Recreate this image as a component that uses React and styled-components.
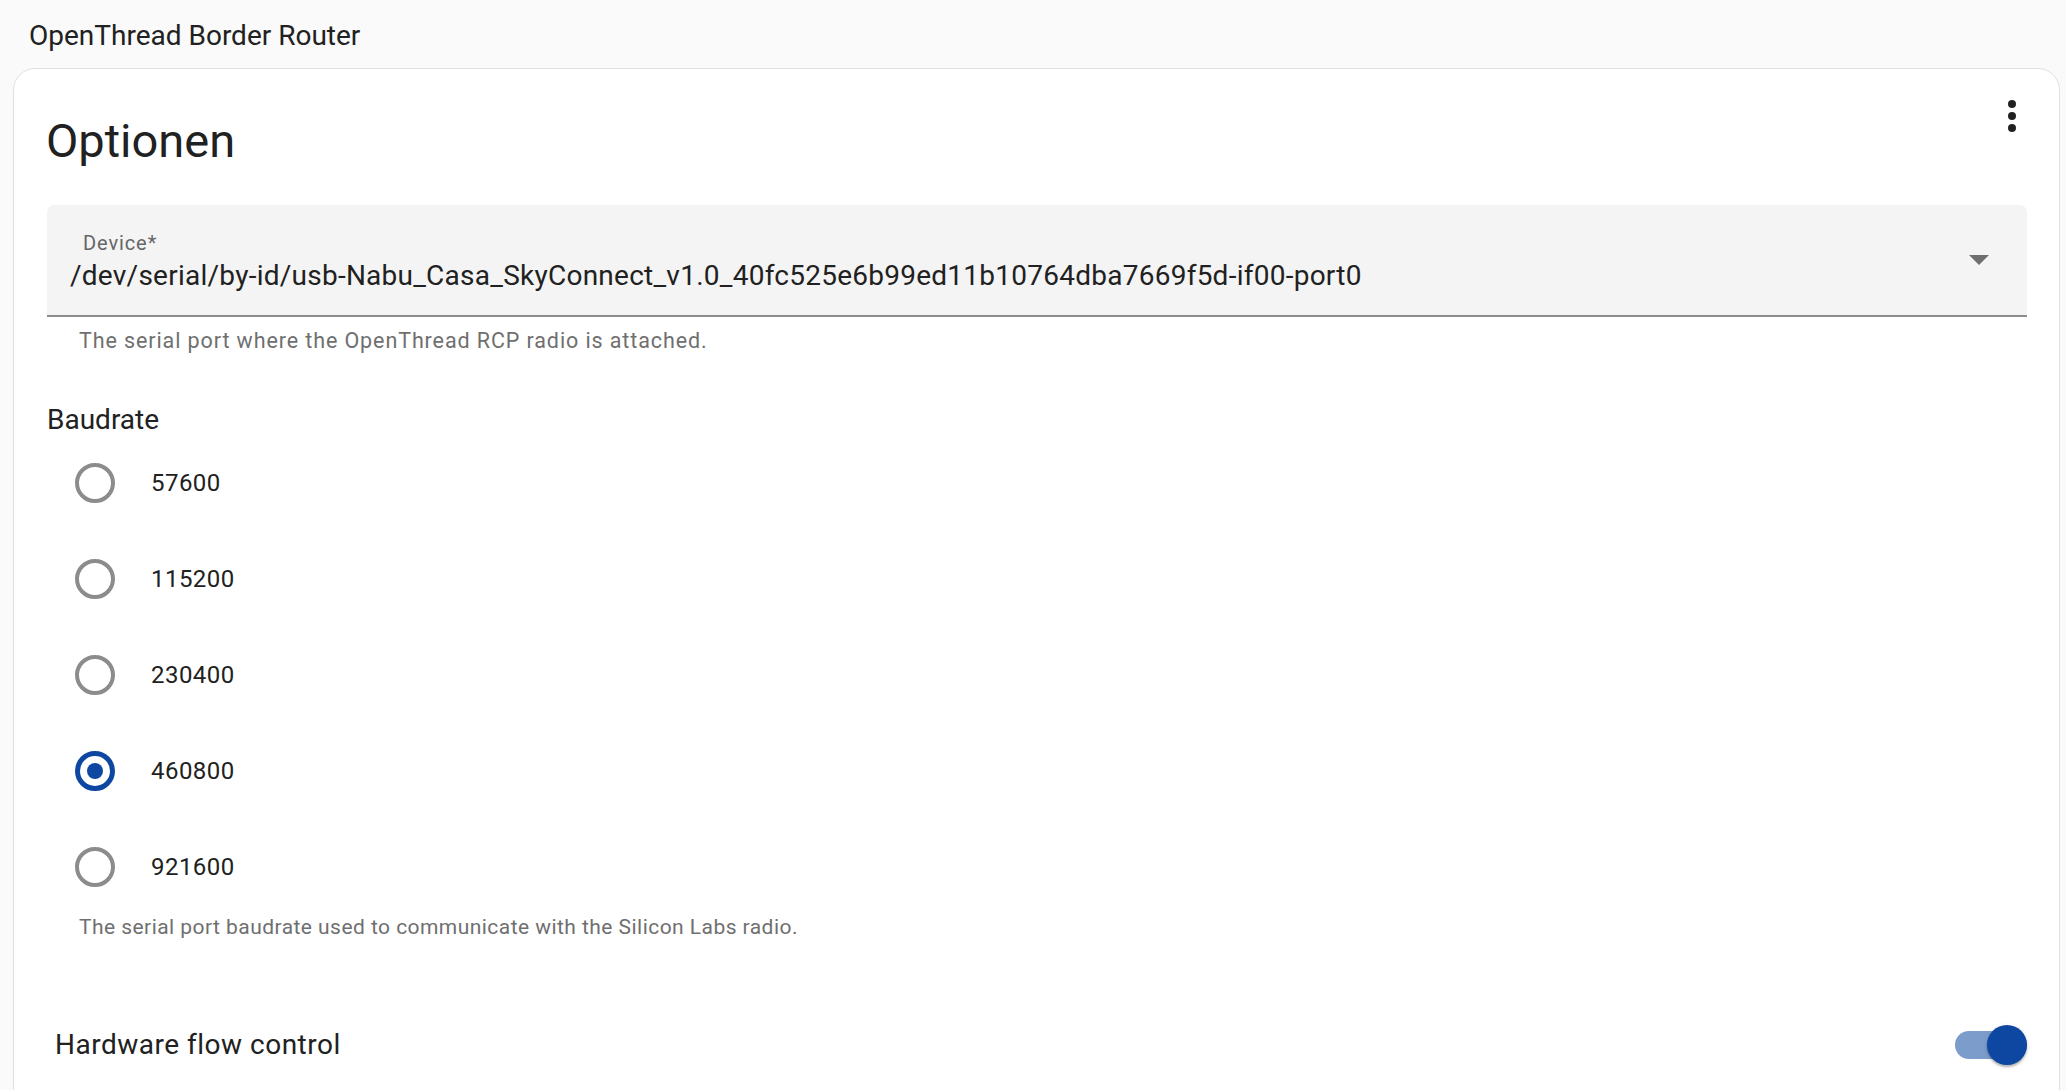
import React from "react";
import styled, { createGlobalStyle } from "styled-components";

const GlobalStyle = createGlobalStyle`
  html, body {
    margin: 0;
    padding: 0;
    background: #fafafa;
    font-family: Roboto, "Noto Sans", "Liberation Sans", sans-serif;
    color: #212121;
    overflow: hidden;
  }
  * { box-sizing: border-box; }
`;

const Page = styled.div`
  display: flex;
  flex-direction: column;
  min-height: 100vh;
`;

const TopBar = styled.div`
  height: 68px;
  padding: 16px 0 0 29px;
  font-size: 28px;
  line-height: 40px;
  color: #212121;
`;

const Card = styled.section`
  position: relative;
  margin: 0 6px 0 13px;
  padding: 0 32px 120px 33px;
  background: #fff;
  border: 1px solid #e0e0e0;
  border-radius: 22px 22px 0 0;
`;

const CardHeader = styled.div`
  display: flex;
  justify-content: space-between;
  align-items: flex-start;
  padding-top: 23px;
`;

const Title = styled.h1`
  margin: 21px 0 0 -1px;
  font-size: 47px;
  font-weight: 400;
  line-height: 56px;
`;

const MenuButton = styled.button`
  width: 48px;
  height: 48px;
  margin-right: -9px;
  padding: 0;
  border: 0;
  background: none;
  color: #212121;
  display: flex;
  align-items: center;
  justify-content: center;
`;

const SelectField = styled.div`
  display: flex;
  align-items: center;
  height: 112px;
  margin-top: 36px;
  background: #f4f4f4;
  border-radius: 7px 7px 0 0;
  border-bottom: 2px solid #8d8d8d;
`;

const FieldText = styled.div`
  flex: 1;
  display: flex;
  flex-direction: column;
  align-self: stretch;
  padding: 28px 0 0 23px;
`;

const FloatingLabel = styled.span`
  margin-left: 13px;
  margin-bottom: 7px;
  font-size: 20px;
  line-height: 20px;
  letter-spacing: 0.9px;
  color: #666;
`;

const SelectedValue = styled.span`
  font-size: 28px;
  line-height: 32px;
  letter-spacing: 0.25px;
  color: #212121;
  white-space: nowrap;
`;

const DropArrow = styled.svg`
  width: 20px;
  height: 10px;
  margin-right: 38px;
  fill: #6f6f6f;
`;

const HelperText = styled.div`
  margin-top: ${(p) => p.$gap || 0}px;
  padding-left: ${(p) => p.$indent}px;
  font-size: ${(p) => p.$size}px;
  line-height: 24px;
  letter-spacing: ${(p) => p.$spacing}px;
  color: #6f6f6f;
`;

const SectionLabel = styled.div`
  margin-top: 51px;
  font-size: 28px;
  line-height: 32px;
  color: #212121;
`;

const RadioList = styled.div`
  display: flex;
  flex-direction: column;
  margin-top: -1px;
`;

const RadioRow = styled.label`
  display: flex;
  align-items: center;
  gap: 36px;
  height: 96px;
  padding-left: 28px;
`;

const RadioCircle = styled.span`
  width: 40px;
  height: 40px;
  border-radius: 50%;
  border: ${(p) => (p.$checked ? "5px solid #0d47a1" : "4px solid #8c8c8c")};
  display: flex;
  align-items: center;
  justify-content: center;

  &::after {
    content: "";
    width: 16px;
    height: 16px;
    border-radius: 50%;
    background: #0d47a1;
    display: ${(p) => (p.$checked ? "block" : "none")};
  }
`;

const RadioLabel = styled.span`
  font-size: 24px;
  line-height: 32px;
  letter-spacing: 0.45px;
  color: #212121;
`;

const ToggleRow = styled.div`
  display: flex;
  align-items: center;
  justify-content: space-between;
  height: 56px;
  margin-top: 78px;
  padding-left: 8px;
`;

const ToggleLabel = styled.span`
  font-size: 28px;
  line-height: 32px;
  letter-spacing: 0.5px;
  color: #212121;
`;

const Switch = styled.span`
  position: relative;
  display: flex;
  align-items: center;
  width: 72px;
  height: 40px;
`;

const Track = styled.span`
  width: 72px;
  height: 28px;
  border-radius: 14px;
  background: ${(p) => (p.$on ? "#7c9ccc" : "#bdbdbd")};
`;

const Thumb = styled.span`
  position: absolute;
  top: 0;
  ${(p) => (p.$on ? "right: 0;" : "left: 0;")}
  width: 40px;
  height: 40px;
  border-radius: 50%;
  background: ${(p) => (p.$on ? "#0d47a1" : "#fafafa")};
  box-shadow: 0 2px 2px rgba(0, 0, 0, 0.24), 0 1px 5px rgba(0, 0, 0, 0.12);
`;

const baudrates = ["57600", "115200", "230400", "460800", "921600"];

const DotsVertical = () => (
  <svg width="48" height="48" viewBox="0 0 24 24" fill="currentColor">
    <path d="M12,16A2,2 0 0,1 14,18A2,2 0 0,1 12,20A2,2 0 0,1 10,18A2,2 0 0,1 12,16M12,10A2,2 0 0,1 14,12A2,2 0 0,1 12,14A2,2 0 0,1 10,12A2,2 0 0,1 12,10M12,4A2,2 0 0,1 14,6A2,2 0 0,1 12,8A2,2 0 0,1 10,6A2,2 0 0,1 12,4Z" />
  </svg>
);

const App = () => {
  const selected = "460800";

  return (
    <Page>
      <GlobalStyle />
      <TopBar>OpenThread Border Router</TopBar>
      <Card>
        <CardHeader>
          <Title>Optionen</Title>
          <MenuButton aria-label="Menu">
            <DotsVertical />
          </MenuButton>
        </CardHeader>

        <SelectField>
          <FieldText>
            <FloatingLabel>Device*</FloatingLabel>
            <SelectedValue>
              /dev/serial/by-id/usb-Nabu_Casa_SkyConnect_v1.0_40fc525e6b99ed11b10764dba7669f5d-if00-port0
            </SelectedValue>
          </FieldText>
          <DropArrow viewBox="0 0 20 10">
            <polygon points="0,0 20,0 10,10" />
          </DropArrow>
        </SelectField>
        <HelperText $gap={12} $indent={32} $size={21.5} $spacing={0.9}>
          The serial port where the OpenThread RCP radio is attached.
        </HelperText>

        <SectionLabel>Baudrate</SectionLabel>
        <RadioList>
          {baudrates.map((rate) => (
            <RadioRow key={rate}>
              <RadioCircle $checked={rate === selected} />
              <RadioLabel>{rate}</RadioLabel>
            </RadioRow>
          ))}
        </RadioList>
        <HelperText $indent={32} $size={21} $spacing={0.45}>
          The serial port baudrate used to communicate with the Silicon Labs radio.
        </HelperText>

        <ToggleRow>
          <ToggleLabel>Hardware flow control</ToggleLabel>
          <Switch>
            <Track $on />
            <Thumb $on />
          </Switch>
        </ToggleRow>
      </Card>
    </Page>
  );
};

export default App;
